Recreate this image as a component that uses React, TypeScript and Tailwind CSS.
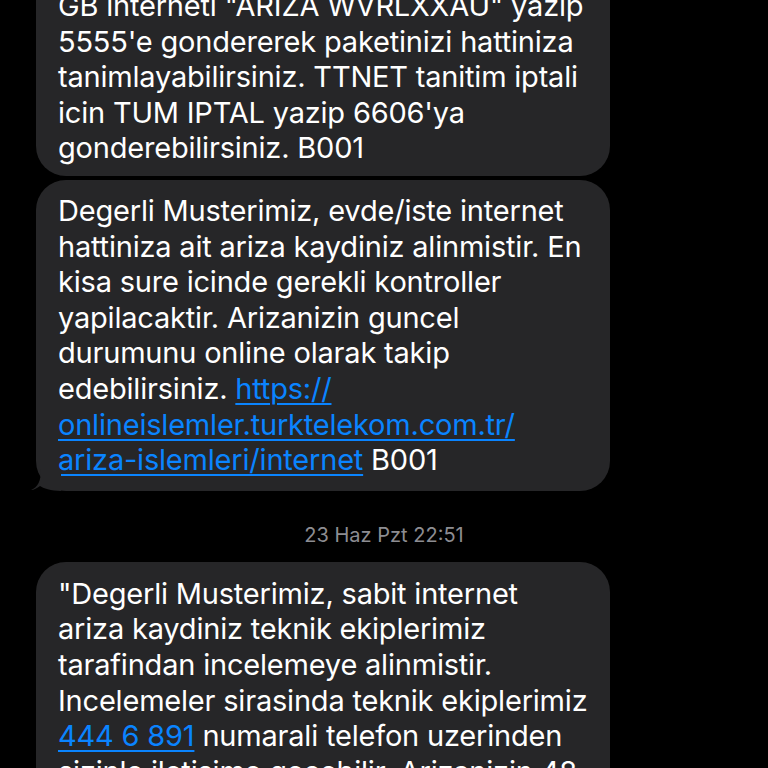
import React from 'react';

const FONT = { fontFamily: 'Inter, "Noto Sans", "Liberation Sans", sans-serif' };

function Link({ children }: { children: React.ReactNode }) {
  return <span className="text-[#0a84ff] underline decoration-[1.5px] underline-offset-[4px]">{children}</span>;
}

function Bubble({ lines, tail, className = '' }: { lines: React.ReactNode[]; tail?: boolean; className?: string }) {
  return (
    <div className={`relative ml-[36px] w-[574px] bg-[#262628] rounded-[30px] px-[22px] ${className}`}>
      {lines.map((l, i) => (
        <div key={i} className="whitespace-nowrap">{l}</div>
      ))}
      {tail && (
        <svg className="absolute left-[-9px] bottom-0" width="34" height="22" viewBox="0 0 34 22">
          <path d="M4 21 C11 18 14 12 14 0 L34 0 L34 22 C24 22 16 19 13 17 C10 19 7 21 4 21 Z" fill="#262628" />
        </svg>
      )}
    </div>
  );
}

export default function App() {
  return (
    <div className="w-[768px] h-[768px] overflow-hidden bg-black text-white" style={FONT}>
      <div className="-mt-[12px] text-[29px] leading-[35.6px] tracking-[-0.2px]">
        <Bubble
          className="rounded-t-none pb-[10px]"
          lines={[
            'GB interneti "ARIZA WVRLXXAU" yazip',
            "5555'e gondererek paketinizi hattiniza",
            'tanimlayabilirsiniz. TTNET tanitim iptali',
            "icin TUM IPTAL yazip 6606'ya",
            'gonderebilirsiniz. B001',
          ]}
        />
        <Bubble
          tail
          className="mt-[4px] pt-[13px] pb-[13px]"
          lines={[
            'Degerli Musterimiz, evde/iste internet',
            'hattiniza ait ariza kaydiniz alinmistir. En',
            'kisa sure icinde gerekli kontroller',
            'yapilacaktir. Arizanizin guncel',
            'durumunu online olarak takip',
            <>edebilirsiniz. <Link>https://</Link></>,
            <Link>onlineislemler.turktelekom.com.tr/</Link>,
            <><Link>ariza-islemleri/internet</Link> B001</>,
          ]}
        />
        <div className="pt-[34px] pb-[17px] text-center text-[20px] leading-[20px] text-[#8d8d92] tracking-normal">
          23 Haz Pzt 22:51
        </div>
        <Bubble
          className="pt-[14px] pb-[13px]"
          lines={[
            '"Degerli Musterimiz, sabit internet',
            'ariza kaydiniz teknik ekiplerimiz',
            'tarafindan incelemeye alinmistir.',
            'Incelemeler sirasinda teknik ekiplerimiz',
            <><Link>444 6 891</Link> numarali telefon uzerinden</>,
            'sizinle iletisime gecebilir. Arizanizin 48',
            'saat icinde giderilmesi hedeflenmektedir.',
          ]}
        />
      </div>
    </div>
  );
}
